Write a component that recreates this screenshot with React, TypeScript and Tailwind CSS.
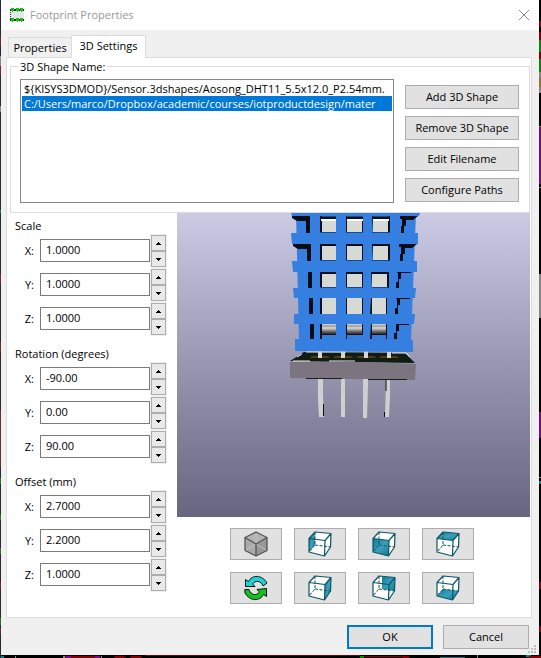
import { useState } from "react";

const shapes = [
  "${KISYS3DMOD}/Sensor.3dshapes/Aosong_DHT11_5.5x12.0_P2.54mm.",
  "C:/Users/marco/Dropbox/academic/courses/iotproductdesign/mater",
];

const sections = [
  { title: "Scale", step: 0.1, digits: 4, values: [1, 1, 1] },
  { title: "Rotation (degrees)", step: 10, digits: 2, values: [-90, 0, 90] },
  { title: "Offset (mm)", step: 0.1, digits: 4, values: [2.7, 2.2, 1] },
];

const axes = ["X", "Y", "Z"];

const buttonClass =
  "flex h-6 items-center justify-center border border-[#adadad] bg-[#e1e1e1] leading-4 text-black";

function FootprintIcon() {
  return (
    <svg className="h-4 w-4" viewBox="0 0 16 16" shapeRendering="crispEdges" aria-hidden="true">
      <rect x="1" y="3" width="14" height="10" fill="#e6e6e6" />
      <path d="M1.500 5v7" stroke="#333" strokeDasharray="1 1" />
      {[1, 11].map((y) => (
        <g key={y}>
          <rect x="1" y={y + 1} width="14" height="2" fill="#333" />
          {[2, 7, 11].map((x) => (
            <g key={x} fill="#12c412">
              <rect x={x} y={y} width="3" height="3" />
              <rect x={x + 1} y={y + 3} width="1" height="1" />
            </g>
          ))}
        </g>
      ))}
    </svg>
  );
}

function Arrow({ down = false }: { down?: boolean }) {
  return (
    <svg className="h-[3px] w-[5px]" viewBox="0 0 5 3" shapeRendering="crispEdges" aria-hidden="true">
      {down ? (
        <path d="M0 0h5v1H4v1H3v1H2V2H1V1H0z" />
      ) : (
        <path d="M2 0h1v1h1v1h1v1H0V2h1V1h1z" />
      )}
    </svg>
  );
}

function SpinRow({ group, axis, initial, step, digits }: { group: string; axis: string; initial: number; step: number; digits: number }) {
  const [text, setText] = useState(initial.toFixed(digits));
  const id = `${group}-${axis}`;
  const bump = (d: number) => setText(((parseFloat(text) || 0) + d).toFixed(digits));
  const spin =
    "flex h-4 w-[15px] items-center justify-center border border-[#adadad] bg-[#e9e9e9]";
  return (
    <div className="flex h-[34px] items-start">
      <label htmlFor={id} className="w-7 pt-[9px] pr-1 text-right leading-4">
        {axis}:
      </label>
      <input
        id={id}
        value={text}
        onChange={(e) => setText(e.target.value)}
        className="mt-[5px] ml-[2px] h-[23px] min-w-0 flex-1 border border-[#7a7a7a] bg-white px-[5px] pb-[2px] leading-4 outline-none"
      />
      <div className="flex h-[34px] w-[17px] flex-col items-center bg-[#f0f0f0] pt-px">
        <button type="button" aria-label={`Increase ${id}`} className={spin} onClick={() => bump(step)}>
          <Arrow />
        </button>
        <button type="button" aria-label={`Decrease ${id}`} className={spin} onClick={() => bump(-step)}>
          <Arrow down />
        </button>
      </div>
    </div>
  );
}

const faces: Record<string, string> = {
  left: "M7 1 1 7.500V21L7 14z",
  front: "M1 7.500 17 9.500 16.500 25 1 21z",
  top: "M7 1 23 2.500 17 9.500 1 7.500z",
  right: "M23 2.500 17 9.500 16.500 25 22.500 16z",
  back: "M10 1.500 23 2.500 22.500 16 10 14z",
  bottom: "M7 14 22.500 16 16.500 25 1 21z",
};

function ViewCube({ face }: { face: string }) {
  return (
    <svg className="h-[26px] w-6" viewBox="0 0 24 26" fill="none" aria-hidden="true">
      <defs>
        <linearGradient id={`face-${face}`} x1="0" y1="0" x2="1" y2="1">
          <stop offset="0" stopColor="#0f7a95" />
          <stop offset="0.5" stopColor="#3d9fba" />
          <stop offset="1" stopColor="#0f7a95" />
        </linearGradient>
      </defs>
      <path d="M7 1 23 2.500 22.500 16 16.500 25 1 21V7.500z" fill="#fff" />
      <path d={faces[face]} fill={`url(#face-${face})`} />
      <path d="M7 1V14L1 21M7 14 22.500 16" stroke="#0b5567" strokeDasharray="3 1.500" />
      <path
        d="M7 1 23 2.500 22.500 16 16.500 25 1 21V7.500zM1 7.500 17 9.500 23 2.500M17 9.500 16.500 25"
        stroke="#0b5567"
        strokeWidth="1.200"
        strokeLinejoin="round"
      />
    </svg>
  );
}

function IsoCube() {
  return (
    <svg className="h-[26px] w-6" viewBox="0 0 24 26" fill="none" aria-hidden="true">
      <path d="M12 1 23 6.500V19.500L12 25 1 19.500V6.500z" fill="#aaa" />
      <path d="M12 13 23 6.500V19.500L12 25z" fill="#989898" />
      <path d="M12 1 23 6.500 12 13 1 6.500z" fill="#b4b4b4" />
      <path d="M12 1V13M1 19.500 12 13 23 19.500" stroke="#c0c0c0" />
      <path d="M12 1 23 6.500V19.500L12 25 1 19.500V6.500zM1 6.500 12 13 23 6.500M12 13V25" stroke="#555" strokeWidth="1.300" strokeLinejoin="round" />
    </svg>
  );
}

function ReloadIcon() {
  return (
    <svg className="h-[26px] w-6" viewBox="0 0 24 26" stroke="#111" strokeLinejoin="miter" aria-hidden="true">
      <path d="M1.500 4.500 4.500 6.500C8-.5 18-.5 23 8L19 11C17 5.500 11.500 5 8.500 9L11 11.500H1.500z" fill="#19d5d5" />
      <path d="M22.500 21.500 19.500 19.500C16 26.500 6 26.500 1 18L.8 14.500H5C7 20.500 12.500 21 15.500 17L13 14.500 22.500 13.500z" fill="#0fc51c" />
    </svg>
  );
}

function SensorModel() {
  const rows = [
    { y: 216, h: 17, shade: false },
    { y: 244, h: 17, shade: false },
    { y: 272, h: 16, shade: false },
    { y: 298, h: 16, shade: false },
    { y: 324, h: 15, shade: true },
  ];
  const bars = [
    "291,213 420,213 419,216 292,216",
    "291,233 418,233 418,244 292,244",
    "292,261 417,261 417,272 293,272",
    "293,288 416,288 415,298 294,298",
    "294,314 415,314 414,324 294,324",
    "295,339 413,340 413,352 295,351",
  ];
  return (
    <svg className="h-[304px] w-[353px] shrink-0" viewBox="177 213 353 304" role="img" aria-label="3D model preview">
      <defs>
        <linearGradient id="barrel" x1="0" y1="0" x2="0" y2="1">
          <stop offset="0" stopColor="#dcdcdc" />
          <stop offset="0.2" stopColor="#9a9a9a" />
          <stop offset="0.4" stopColor="#d8d8d8" />
          <stop offset="0.8" stopColor="#5a5a5a" />
          <stop offset="1" stopColor="#2f2f2f" />
        </linearGradient>
      </defs>
      <path d="M304 352 405 353 415 363 290 361z" fill="#111d14" />
      <path d="M306 352h40M392 353h14l4 4M293 361h17M329 361h26M302 354l-5 3" stroke="#eee" fill="none" />
      {[320, 343, 366, 389].map((x) => (
        <g key={x}>
          <path d={`M${x - 8} 356h16l2 2h-20z`} fill="#503b12" />
          <rect x={x - 2} y="351" width="4" height="7" fill="#d4d6d2" />
        </g>
      ))}
      <path d="M290 362 368 362 416 364 415 380 290 378z" fill="#7c747e" />
      <path d="M306 378.500h36M365 379.500h42" stroke="#1b211d" />
      <path d="M318 379h5v17l1 21h-5l-1-16zM341 379h4v38h-4zM363 379h5v7l-1 32h-4zM386 380h4v18l-1 19h-4z" fill="#cdd0cf" />
      <path d="M323.500 404v12M386 380v11M384.500 412v5" stroke="#101010" />
      <path d="M296 213H416L411 340H299z" fill="#347fdf" />
      {rows.map((r, i) => (
        <g key={r.y}>
          <path d={`M${306 + i} ${r.y}h4v${r.h}h-4z`} fill="#050d18" />
          {i < 2 && <path d={`M${292 + i} ${r.y}h15v5h-10l-5-3z`} fill="#050d18" />}
          {i < 2 ? (
            <path d={`M${400 - i} ${r.y}h18l-5 4h-7v6h-2v7h-3v-7h1v-7h-2z`} fill="#050d18" />
          ) : (
            <path d={`M${399 - i} ${r.y}h14v1h-10v6h-2v${r.h - 7}h-3v-6h2v-9h-1z`} fill="#050d18" />
          )}
          <path d={`M320 ${r.y}h16v${r.h}h-16zM346 ${r.y}h17v${r.h}h-17zM${372 - (i > 1 ? 1 : 0)} ${r.y}h${i > 2 ? 16 : 18}v${r.h}h-17z`} fill="#06101b" />
          {[322, 347, 373].map((x, k) => (
            <rect
              key={x}
              x={i > 1 && k === 2 ? x - 1 : x}
              y={r.shade || i === 3 ? r.y : i === 0 ? r.y + 3 : r.y + 2}
              width={k === 0 ? 14 : k === 2 && i > 2 ? 14 : 15}
              height={r.shade ? 10 : r.h - (i === 0 ? 3 : i === 3 ? 0 : 2)}
              fill={r.shade ? "url(#barrel)" : "#d7d9d5"}
            />
          ))}
          {i === 0 && <path d="M321 220h15M347 220h16M373 220h16" stroke="#fff" strokeWidth="2" />}
          {r.shade && <path d="M322 335h14v4h-14zM347 335h16v4h-16zM372 335h14v4h-14z" fill="#347fdf" />}
        </g>
      ))}
      {bars.map((p) => (
        <polygon key={p} points={p} fill="#347fdf" />
      ))}
      <path d="M322 216.500h14M347 216.500h16M373 216.500h16M320 232.500h16M346 232.500h17M372 232.500h18M320 260.500h16M346 260.500h17M372 260.500h17M320 287.500h16M346 287.500h17M372 287.500h16" stroke="#174b8b" />
    </svg>
  );
}

/* Layout editor canvas that shows around the dialog's edges. */
function Backdrop() {
  return (
    <svg className="absolute inset-0 h-[658px] w-[541px]" viewBox="0 0 541 658" shapeRendering="crispEdges" aria-hidden="true">
      <path d="M0 0h1v658H0z" fill="#2b292d" />
      <path d="M0 37h1v9H0zM0 66h1v9H0zM0 274h1v10H0zM0 342h1v10H0zM0 410h1v57H0zM0 582h1v7H0zM0 628h1v6H0z" fill="#702a2f" />
      <path d="M0 56h1v10H0zM0 106h1v6H0z" fill="#888" />
      <path d="M0 478h1v6H0zM0 514h1v6H0zM0 548h1v6H0zM0 618h1v7H0z" fill="#267326" />
      <path d="M0 210h1v3H0zM1 656h3v2H1zM440 657h25v1h-25zM539 481h2v3h-2zM526 655h5v2h-5z" fill="#087f82" />
      <path d="M539 21h2v6h-2zM539 32h2v8h-2zM539 52h2v7h-2zM539 582h2v7h-2zM539 626h2v6h-2zM65 656h32v2H65zM113 656h10l4 2h-12zM130 656h10l3 2h-12zM145 655h215v1H145zM360 656h49v1h-49zM403 656h6v2h-6zM529 656h12v2h-12z" fill="#810007" />
      <path d="M539 40h2v12h-2zM539 59h2v13h-2zM360 656h4v2h-4z" fill="#078307" />
      <path d="M539 72h2v6h-2zM539 87h2v6h-2zM539 274h2v44h-2zM539 477h2v1h-2zM15 656h1v2h-1zM63 656h2v2h-2zM101 656h1v2h-1zM477 655h1v3h-1z" fill="#858585" />
      <path d="M539 78h2v9h-2zM539 126h2v1h-2zM539 187h2v1h-2z" fill="#8b7825" />
      <path d="M539 127h2v57h-2zM539 412h2v26h-2zM66 656h5v2h-5zM95 656h5v2h-5z" fill="#750b82" />
    </svg>
  );
}

export default function App() {
  const [selected, setSelected] = useState(1);
  const [tab, setTab] = useState(1);
  return (
    <div className="relative min-h-screen overflow-hidden bg-black pr-[2px] pb-[3px] pl-px font-['Open_Sans','Noto_Sans',sans-serif] text-[11px] text-black">
      <Backdrop />
      <div role="dialog" aria-label="Footprint Properties" className="relative bg-[#f0f0f0]">
        <header className="flex h-[30px] items-center bg-white pr-[9px] pl-2">
          <FootprintIcon />
          <h1 className="ml-[5px] flex-1 leading-4 text-[#999]">Footprint Properties</h1>
          <button type="button" aria-label="Close">
            <svg className="h-3 w-3" viewBox="0 0 12 12" aria-hidden="true">
              <path d="M1 1 11 11M11 1 1 11" stroke="#888" />
            </svg>
          </button>
        </header>

        <div role="tablist" className="flex h-[27px] items-end pl-[7px]">
          {["Properties", "3D Settings"].map((name, i) => (
            <button
              key={name}
              type="button"
              role="tab"
              aria-selected={tab === i}
              onClick={() => setTab(i)}
              className={
                tab === i
                  ? "relative z-10 -mb-px h-[23px] w-[75px] border border-b-0 border-[#dcdcdc] bg-white pb-[2px] leading-4"
                  : "h-5 w-[63px] border border-r-0 border-b-0 border-[#dcdcdc] bg-[#f0f0f0] leading-4"
              }
            >
              {name}
            </button>
          ))}
        </div>

        <main className="mr-[7px] ml-[5px] h-[561px] border border-[#dcdcdc] bg-white pr-px pl-[3px]">
          <fieldset className="h-[155px] min-w-0 border border-[#dcdcdc] pr-[10px] pl-[9px]">
            <legend className="-ml-[2px] h-[17px] px-[2px] leading-[17px]">3D Shape Name:</legend>
            <div className="flex items-start gap-[11px] pt-1">
              <ul role="listbox" aria-label="3D shapes" className="h-[124px] min-w-0 flex-1 border border-[#828790] p-px">
                {shapes.map((path, i) => (
                  <li
                    key={path}
                    role="option"
                    aria-selected={selected === i}
                    onClick={() => setSelected(i)}
                    className={
                      selected === i
                        ? "h-[15px] overflow-hidden bg-[#0078d7] pl-[2px] leading-[15px] whitespace-nowrap text-white"
                        : "h-[15px] overflow-hidden pl-[2px] leading-[15px] whitespace-nowrap"
                    }
                  >
                    {path}
                  </li>
                ))}
              </ul>
              <div className="flex w-[114px] flex-col gap-[7px] pt-[6px]">
                {["Add 3D Shape", "Remove 3D Shape", "Edit Filename", "Configure Paths"].map((name) => (
                  <button key={name} type="button" className={buttonClass}>
                    {name}
                  </button>
                ))}
              </div>
            </div>
          </fieldset>

          <div className="flex gap-[10px]">
            <div className="flex w-[157px] shrink-0 flex-col gap-[10px] pt-[5px]">
              {sections.map((s) => (
                <section key={s.title}>
                  <h2 className="h-4 pl-[5px] leading-4">{s.title}</h2>
                  {axes.map((axis, i) => (
                    <SpinRow key={axis} group={s.title} axis={axis} initial={s.values[i]} step={s.step} digits={s.digits} />
                  ))}
                </section>
              ))}
            </div>
            <div className="flex min-w-0 flex-1 flex-col">
              <div className="flex justify-center overflow-hidden bg-linear-to-b from-[#cbcbe5] to-[#666680]">
                <SensorModel />
              </div>
              <div className="grid grid-cols-[repeat(4,52px)] justify-center gap-3 pt-[11px] pr-1">
                {["iso", "left", "front", "top", "reload", "right", "back", "bottom"].map((v) => (
                  <button
                    key={v}
                    type="button"
                    aria-label={`View ${v}`}
                    className="flex h-8 items-center justify-center border border-[#adadad] bg-[#e1e1e1]"
                  >
                    {v === "iso" ? <IsoCube /> : v === "reload" ? <ReloadIcon /> : <ViewCube face={v} />}
                  </button>
                ))}
              </div>
            </div>
          </div>
        </main>

        <footer className="flex h-[37px] justify-end gap-[10px] pt-[7px] pr-[10px]">
          <button type="button" className="flex h-6 w-[86px] items-center justify-center border-2 border-[#0078d7] bg-[#e1e1e1] leading-4">
            OK
          </button>
          <button type="button" className="flex h-6 w-[86px] items-center justify-center border border-[#adadad] bg-[#e1e1e1] leading-4">
            Cancel
          </button>
        </footer>
        <svg className="absolute right-[3px] bottom-[2px] h-2 w-2" viewBox="0 0 8 8" fill="#bfbfbf" shapeRendering="crispEdges" aria-hidden="true">
          <path d="M6 0h2v2H6zM3 3h2v2H3zM6 3h2v2H6zM0 6h2v2H0zM3 6h2v2H3zM6 6h2v2H6z" />
        </svg>
      </div>
    </div>
  );
}
